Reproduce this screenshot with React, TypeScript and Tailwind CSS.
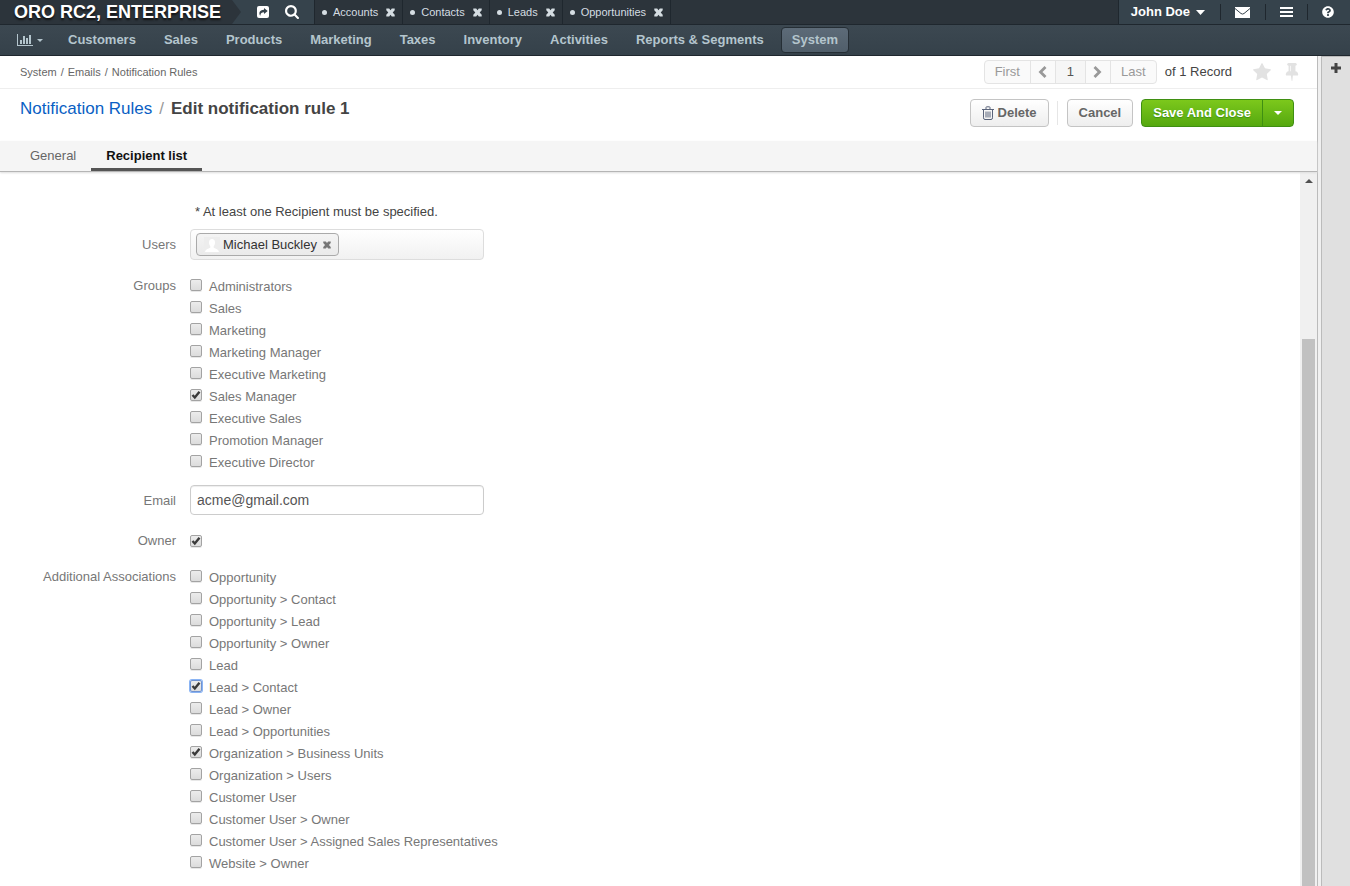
import React, { useState } from 'react';
import { FaQuestionCircle } from 'react-icons/fa';

const NAV_ITEMS = ['Customers', 'Sales', 'Products', 'Marketing', 'Taxes', 'Inventory', 'Activities', 'Reports & Segments', 'System'];

const PINNED_TABS = ['Accounts', 'Contacts', 'Leads', 'Opportunities'];

const GROUPS = [
  'Administrators',
  'Sales',
  'Marketing',
  'Marketing Manager',
  'Executive Marketing',
  'Sales Manager',
  'Executive Sales',
  'Promotion Manager',
  'Executive Director',
];

const ASSOCIATIONS = [
  'Opportunity',
  'Opportunity > Contact',
  'Opportunity > Lead',
  'Opportunity > Owner',
  'Lead',
  'Lead > Contact',
  'Lead > Owner',
  'Lead > Opportunities',
  'Organization > Business Units',
  'Organization > Users',
  'Customer User',
  'Customer User > Owner',
  'Customer User > Assigned Sales Representatives',
  'Website > Owner',
];

type IconProps = { className?: string };

const CloseIcon: React.FC<IconProps> = ({ className }) => (
  <svg viewBox="0 0 9 9" fill="currentColor" className={className} aria-hidden="true">
    <path d="M.3 .5h2.900L4.500 2.300 5.800 .5h2.900v1.700L6.700 4.500l2 2.300v1.700H5.800L4.500 6.700 3.200 8.500H.3V6.800l2-2.300-2-2.300z" />
  </svg>
);

const ShareIcon: React.FC<IconProps> = ({ className }) => (
  <svg viewBox="0 0 12 12" className={className} aria-hidden="true">
    <rect width="12" height="12" rx="2" fill="#fff" />
    <path d="M7 2l3.700 3L7 8V6.200C4.700 6.200 3.600 7 3.300 9.800 1.600 8 2 3.900 7 3.800z" fill="#36434c" />
  </svg>
);

const SearchIcon: React.FC<IconProps> = ({ className }) => (
  <svg viewBox="0 128 1664 1664" fill="currentColor" className={className} aria-hidden="true">
    <path d="M1152 832q0-185-131.500-316.500t-316.500-131.500-316.500 131.500-131.500 316.500 131.500 316.500 316.500 131.500 316.500-131.500 131.500-316.500zm512 832q0 52-38 90t-90 38q-54 0-90-38l-343-342q-179 124-399 124-143 0-273.500-55.500t-225-150-150-225-55.500-273.500 55.500-273.500 150-225 225-150 273.500-55.500 273.500 55.500 225 150 150 225 55.500 273.500q0 220-124 399l343 343q37 37 37 90z" />
  </svg>
);

const ChartIcon: React.FC<IconProps> = ({ className }) => (
  <svg viewBox="0 0 16 12" fill="currentColor" className={className} aria-hidden="true">
    <path d="M0 0h1v11h15v1H0zM3 6h2v4H3zM6 2h2v8H6zM9 4h2v6H9zM12 1h2v9h-2z" />
  </svg>
);

const CaretIcon: React.FC<IconProps> = ({ className }) => (
  <svg viewBox="0 0 8 4" fill="currentColor" preserveAspectRatio="none" className={className} aria-hidden="true">
    <path d="M0 0h8L4 4z" />
  </svg>
);

const EnvelopeIcon: React.FC<IconProps> = ({ className }) => (
  <svg viewBox="0 0 16 12" className={className} aria-hidden="true">
    <rect y="1" width="15" height="11" fill="#fff" />
    <path d="M0 2.500L6 7.500Q7.500 8.600 9 7.500L15 2.500" fill="none" stroke="#36434c" strokeWidth="1" />
  </svg>
);

const BarsIcon: React.FC<IconProps> = ({ className }) => (
  <svg viewBox="0 0 13 10" fill="currentColor" className={className} aria-hidden="true">
    <path d="M0 0h13v2H0zM0 4h13v2H0zM0 8h13v2H0z" />
  </svg>
);

const ChevronIcon: React.FC<IconProps> = ({ className }) => (
  <svg viewBox="0 0 9 12" fill="none" stroke="currentColor" strokeWidth="2.800" className={className} aria-hidden="true">
    <path d="M7.500 1L2.500 6l5 5" />
  </svg>
);

const StarIcon: React.FC<IconProps> = ({ className }) => (
  <svg viewBox="64 64 1664 1600" fill="currentColor" className={className} aria-hidden="true">
    <path d="M1728 647q0 22-26 48l-363 354 86 500q1 7 1 20 0 21-10.500 35.500t-30.500 14.500q-19 0-40-12l-449-236-449 236q-22 12-40 12-21 0-31.500-14.500t-10.500-35.500q0-6 2-20l86-500-364-354q-25-27-25-48 0-37 56-46l502-73 225-455q19-41 49-41t49 41l225 455 502 73q56 9 56 46z" />
  </svg>
);

const PinIcon: React.FC<IconProps> = ({ className }) => (
  <svg viewBox="320 128 1152 1664" fill="currentColor" className={className} aria-hidden="true">
    <path d="M800 864v-448q0-14-9-23t-23-9-23 9-9 23v448q0 14 9 23t23 9 23-9 9-23zm672 352q0 26-19 45t-45 19h-429l-51 483q-2 12-10.500 20.500t-20.500 8.500h-1q-27 0-32-27l-76-485h-404q-26 0-45-19t-19-45q0-123 78.500-221.500t177.500-98.500v-512q-52 0-90-38t-38-90 38-90 90-38h640q52 0 90 38t38 90-38 90-90 38v512q99 0 177.500 98.500t78.500 221.500z" />
  </svg>
);

const TrashIcon: React.FC<IconProps> = ({ className }) => (
  <svg viewBox="0 0 12 14" fill="none" stroke="currentColor" className={className} aria-hidden="true">
    <path d="M0 3.500h12M4 3V1.500Q4 .8 4.700 .8h2.600q.7 0 .7 .7V3M1.500 4v7.800q0 1.700 1.500 1.700h6q1.500 0 1.500-1.700V4M4 5.500v6M6 5.500v6M8 5.500v6" />
  </svg>
);

const PlusIcon: React.FC<IconProps> = ({ className }) => (
  <svg viewBox="0 0 10 10" fill="currentColor" className={className} aria-hidden="true">
    <path d="M3.500 0h3v3.500H10v3H6.500V10h-3V6.500H0v-3h3.500z" />
  </svg>
);

const AvatarIcon: React.FC<IconProps> = ({ className }) => (
  <svg viewBox="0 0 16 16" className={className} aria-hidden="true">
    <rect width="16" height="16" fill="#ededed" />
    <path d="M8 2c2 0 3 1.500 3 3.500 0 1.700-.6 3-1.300 3.700v1.600c2.300 .8 4.800 1.700 5.300 4.200H1c.5-2.500 3-3.400 5.300-4.200V9.200C5.600 8.500 5 7.200 5 5.500 5 3.500 6 2 8 2z" fill="#fff" />
  </svg>
);

interface CheckboxProps {
  id: string;
  defaultChecked?: boolean;
  autoFocus?: boolean;
}

const Checkbox: React.FC<CheckboxProps> = ({ id, defaultChecked, autoFocus }) => (
  <span className="relative block size-3 shrink-0">
    <input
      id={id}
      type="checkbox"
      defaultChecked={defaultChecked}
      autoFocus={autoFocus}
      className="peer block size-3 appearance-none rounded-xs border border-[#a3a3a3] bg-linear-to-b from-[#ececec] to-[#dcdcdc] shadow-[0_1px_0_#e8e8e8] outline-none focus:border-[#6f93d2] focus:ring focus:ring-[#8ab4f4]"
    />
    <svg viewBox="0 0 12 12" className="pointer-events-none absolute inset-0 hidden size-3 peer-checked:block" aria-hidden="true">
      <path d="M2.500 6l2.300 2.500L9.500 2.800" fill="none" stroke="#3a3a3a" strokeWidth="2.400" />
    </svg>
  </span>
);

interface CheckboxListProps {
  name: string;
  items: string[];
  checked: string[];
  focused?: string;
}

const CheckboxList: React.FC<CheckboxListProps> = ({ name, items, checked, focused }) => (
  <div role="group" aria-labelledby={`${name}-label`}>
    {items.map((item, i) => (
      <div key={item} className="flex h-[22px] items-start gap-[7px] pt-1">
        <Checkbox id={`${name}-${i}`} defaultChecked={checked.includes(item)} autoFocus={item === focused} />
        <label htmlFor={`${name}-${i}`} className="leading-4 whitespace-nowrap text-[#777]">{item}</label>
      </div>
    ))}
  </div>
);

const Header: React.FC = () => (
  <header className="text-white">
    <div className="flex h-[25px] border-b border-[#1f272e] bg-[#2c343b]">
      <div className="flex bg-[#36434c]">
        <a href="#" className="flex w-[232px] items-center bg-[#2c343b] pl-3.5 text-lg leading-6 font-bold whitespace-nowrap [text-shadow:0_2px_2px_#111]">ORO RC2, ENTERPRISE</a>
        <svg viewBox="0 0 9 24" className="h-6 w-[9px]" aria-hidden="true">
          <path d="M0 0l9 12-9 12z" fill="#2c343b" />
        </svg>
        <button aria-label="Share" className="ml-4"><ShareIcon className="size-3" /></button>
        <button aria-label="Search" className="mr-[15px] ml-4"><SearchIcon className="size-3.5" /></button>
      </div>
      <div className="flex border-l border-[#1f272e]">
        {PINNED_TABS.map(tab => (
          <div key={tab} className="flex items-center border-r border-[#1f272e] px-[7px] text-[11px] text-[#d5dde2]">
            <span className="mr-1.5 size-[5px] rounded-full bg-[#d5dde2]" />
            <a href="#">{tab}</a>
            <button aria-label={`Close ${tab}`} className="ml-2"><CloseIcon className="size-[9px]" /></button>
          </div>
        ))}
      </div>
      <div className="ml-auto flex items-center border-l border-[#1f272e] bg-[#36434c] text-[13px] font-bold">
        <button className="flex h-4 items-center gap-1.5 border-r border-[#1f272e] pr-[15px] pl-3">
          John Doe
          <CaretIcon className="h-[5px] w-[9px]" />
        </button>
        <button aria-label="Messages" className="h-4 border-r border-[#1f272e] px-3.5"><EnvelopeIcon className="h-3 w-4" /></button>
        <button aria-label="Menu" className="h-4 border-r border-[#1f272e] px-3.5"><BarsIcon className="h-2.5 w-[13px]" /></button>
        <button aria-label="Help" className="pr-4 pl-3.5"><FaQuestionCircle className="size-3" /></button>
      </div>
    </div>
    <nav className="flex h-[31px] items-center border-b border-[#1f272e] bg-linear-to-b from-[#3c4851] to-[#35414a] text-[13px] font-bold text-[#b4c5cd]">
      <button aria-label="Dashboards" className="mr-3.5 ml-[17px] flex items-center gap-1">
        <ChartIcon className="h-3 w-4" />
        <CaretIcon className="h-[3px] w-1.5" />
      </button>
      <div className="flex gap-1.5">
        {NAV_ITEMS.map(item => (
          <a
            key={item}
            href="#"
            className={`flex h-[26px] items-center rounded-sm border px-2.5 whitespace-nowrap ${item === 'System' ? 'border-[#252e35] bg-linear-to-b from-[#5d6b78] to-[#505e6a]' : 'border-transparent'}`}
          >
            {item}
          </a>
        ))}
      </div>
    </nav>
  </header>
);

const Breadcrumbs: React.FC = () => (
  <div className="flex h-[33px] items-center border-b border-[#eee] pl-5">
    <div className="flex gap-1 text-[11px] text-[#666]">
      <a href="#">System</a>/<a href="#">Emails</a>/<a href="#">Notification Rules</a>
    </div>
    <div className="ml-auto flex h-6 items-stretch divide-x divide-[#e4e4e4] rounded-sm border border-[#e4e4e4] bg-[#fafafa] text-[#999]">
      <button className="w-[46px]">First</button>
      <button aria-label="Previous" className="flex w-[25px] items-center justify-center"><ChevronIcon className="h-3 w-[9px]" /></button>
      <input aria-label="Page" defaultValue="1" className="w-[30px] bg-[#f6f6f6] text-center text-[#555]" />
      <button aria-label="Next" className="flex w-[25px] items-center justify-center"><ChevronIcon className="h-3 w-[9px] rotate-180" /></button>
      <button className="w-[45px]">Last</button>
    </div>
    <span className="ml-2 text-[#444]">of 1 Record</span>
    <button aria-label="Add to favorites" className="ml-[21px] text-[#e2e2e2]"><StarIcon className="size-[18px]" /></button>
    <button aria-label="Pin" className="mr-[18px] ml-3.5 text-[#e2e2e2]"><PinIcon className="h-[18px] w-3.5" /></button>
  </div>
);

const TitleBar: React.FC = () => (
  <div className="flex h-[52px] items-start pt-2.5 pr-[23px] pl-5">
    <h1 className="flex gap-[7px] text-[17px] leading-5">
      <a href="#" className="text-[#0a5fc4]">Notification Rules</a>
      <span className="text-[#999]">/</span>
      <span className="font-bold text-[#444]">Edit notification rule 1</span>
    </h1>
    <div className="ml-auto flex h-7 items-center font-bold text-[#666]">
      <button className="flex h-7 items-center gap-1 rounded-sm border border-[#c4c4c4] bg-linear-to-b from-white to-[#eee] px-[11px]">
        <TrashIcon className="h-3.5 w-3 text-[#59637a]" />
        Delete
      </button>
      <span className="mr-[9px] ml-2 h-6 w-px bg-[#e6e6e6]" />
      <button className="h-7 rounded-sm border border-[#c4c4c4] bg-linear-to-b from-white to-[#eee] px-[11px]">Cancel</button>
      <div className="ml-2 flex h-7 divide-x divide-[#3f8f12] rounded-sm border border-[#3f8f12] bg-linear-to-b from-[#7cc81c] to-[#55a80f] text-white">
        <button className="px-[11px] [text-shadow:0_1px_1px_#3f8f12]">Save And Close</button>
        <button aria-label="More save options" className="px-[11px]"><CaretIcon className="h-1 w-2" /></button>
      </div>
    </div>
  </div>
);

const RecipientForm: React.FC = () => {
  const [users, setUsers] = useState(['Michael Buckley']);

  const removeUser = (name: string) => setUsers(users.filter(user => user !== name));

  return (
    <form className="grid flex-1 grid-cols-[176px_294px] content-start gap-x-3.5 overflow-hidden pt-[30px] leading-5 text-[#777]">
      <p className="col-start-2 pl-[5px] text-[#444]">* At least one Recipient must be specified.</p>

      <label htmlFor="users" className="mt-[7px] pt-1.5 text-right">Users</label>
      <div className="mt-[7px] flex h-[31px] items-center rounded-sm border border-[#ddd] bg-linear-to-b from-white to-[#f1f1f1] px-[5px]">
        {users.map(user => (
          <span key={user} className="flex h-[23px] shrink-0 items-center rounded-sm border border-[#aaa] bg-linear-to-b from-[#f4f4f4] to-[#eaeaea] px-[7px] text-[#333]">
            <AvatarIcon className="mr-[3px] size-4" />
            {user}
            <button type="button" aria-label={`Remove ${user}`} onClick={() => removeUser(user)} className="ml-1.5 text-[#777]"><CloseIcon className="size-2" /></button>
          </span>
        ))}
        <input id="users" className="h-5 min-w-0 flex-1 outline-none" />
      </div>

      <span id="groups-label" className="mt-4 text-right">Groups</span>
      <div className="mt-[15px]">
        <CheckboxList name="groups" items={GROUPS} checked={['Sales Manager']} />
      </div>

      <label htmlFor="email" className="mt-3 pt-1.5 text-right">Email</label>
      <input id="email" type="email" defaultValue="acme@gmail.com" className="mt-3 h-[30px] rounded-sm border border-[#ccc] px-1.5 text-sm text-[#555] shadow-[inset_0_1px_1px_#eee]" />

      <label htmlFor="owner" className="mt-4 text-right">Owner</label>
      <div className="mt-[15px] flex h-[22px] items-center">
        <Checkbox id="owner" defaultChecked />
      </div>

      <span id="associations-label" className="mt-[15px] text-right">Additional Associations</span>
      <div className="mt-3.5">
        <CheckboxList name="associations" items={ASSOCIATIONS} checked={['Lead > Contact', 'Organization > Business Units']} focused="Lead > Contact" />
      </div>
    </form>
  );
};

const App: React.FC = () => {
  return (
    <div className="flex h-screen flex-col overflow-hidden bg-white font-['Liberation_Sans',Arial,sans-serif] text-[13px]">
      <Header />
      <div className="flex min-h-0 flex-1">
        <main className="flex min-w-0 flex-1 flex-col">
          <Breadcrumbs />
          <TitleBar />
          <div className="z-10 flex h-[31px] border-b border-[#b5b5b5] bg-[#f5f5f5] pl-[15px] shadow-[0_1px_2px_#ddd]">
            <a href="#" className="px-[15px] pt-[5px] leading-5 text-[#666]">General</a>
            <a href="#" className="border-b-3 border-[#555] px-[15px] pt-[5px] leading-5 font-bold text-[#111]">Recipient list</a>
          </div>
          <div className="flex min-h-0 flex-1">
            <RecipientForm />
            <div className="flex w-[17px] flex-col items-center bg-[#f0f0f0] pt-[7px]">
              <CaretIcon className="h-1 w-2 rotate-180 text-[#505050]" />
              <div className="mt-39 w-[13px] flex-1 bg-[#c1c1c1]" />
            </div>
          </div>
        </main>
        <aside className="flex w-[33px] border-l border-[#bbb] bg-[#f0f0f0] pl-[3px]">
          <div className="flex flex-1 flex-col items-center border-t border-l border-[#bbb] bg-[#e0e0e0] pt-1.5">
            <button aria-label="Add widget" className="text-[#444]"><PlusIcon className="size-2.5" /></button>
          </div>
        </aside>
      </div>
    </div>
  );
};

export default App;
